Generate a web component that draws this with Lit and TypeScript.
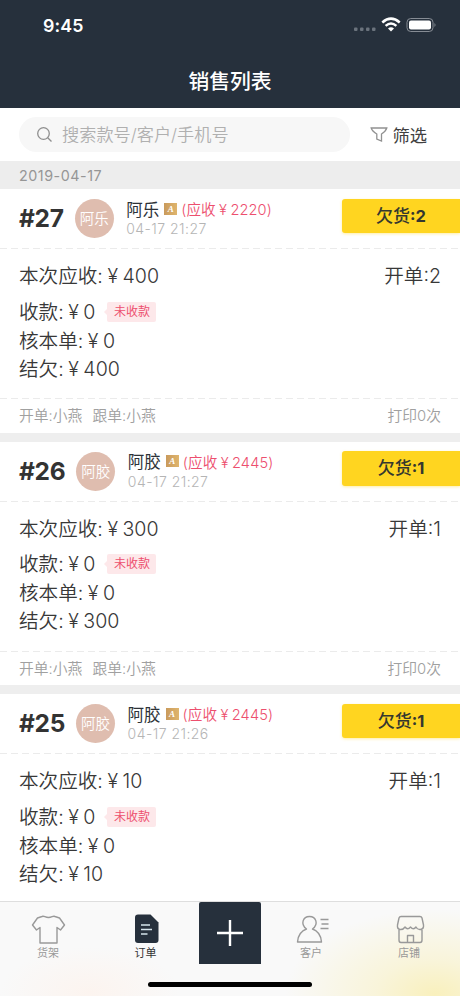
import { LitElement, html, css, svg, nothing } from "lit";
import { customElement, property } from "lit/decorators.js";

interface Order {
  no: number;
  name: string;
  due: number;
  time: string;
  owed: number;
  amount: number;
}

const orders: Order[] = [
  { no: 27, name: "阿乐", due: 2220, time: "04-17 21:27", owed: 2, amount: 400 },
  { no: 26, name: "阿胶", due: 2445, time: "04-17 21:27", owed: 1, amount: 300 },
  { no: 25, name: "阿胶", due: 2445, time: "04-17 21:26", owed: 1, amount: 10 },
];

@customElement("order-card")
export class OrderCard extends LitElement {
  @property({ attribute: false }) order!: Order;
  @property({ type: Boolean }) open = false;

  static styles = css`
    :host { display: block; height: 252.5px; box-sizing: border-box; border-bottom: 9.5px solid #eeeeee; background: #fff; }
    :host([open]) { height: auto; border-bottom: 0; }
    .head { display: flex; height: 59px; box-sizing: border-box; padding-left: 19px; }
    .no { font-weight: 700; font-size: 24.5px; line-height: 30px; color: #333; margin-top: 14px; letter-spacing: -0.3px; }
    .avatar { width: 39px; height: 39px; border-radius: 50%; background: #dfbdaf; color: #fff; font-size: 14.5px; line-height: 39px; text-align: center; margin: 10px 0 0 11px; font-weight: 350; }
    .who { margin: 9px 0 0 12.5px; flex: 1; }
    .line { display: flex; align-items: center; height: 21px; white-space: nowrap; }
    .name { font-size: 16.5px; color: #2d3238; }
    .badge { width: 13px; height: 12px; margin: 0 4px 0 5px; background: linear-gradient(90deg, #c99a5c, #dfb56d); display: flex; align-items: center; justify-content: center; color: #fff; font: italic bold 9px "Liberation Serif", serif; }
    .due { font-size: 14.6px; color: #ed4f6e; font-weight: 350; letter-spacing: 0.1px; }
    .yen { display: inline-block; width: 1em; text-align: center; }
    .time { font-size: 14px; line-height: 18px; margin-top: 1px; color: #b5b5b5; letter-spacing: 0.45px; font-weight: 350; }
    .owed { width: 118px; height: 34.5px; margin-top: 9.5px; box-sizing: border-box; border-radius: 3px 0 0 3px; background: #ffd520; box-shadow: 0 1px 3px #ffd52066; color: #34372f; font-size: 17px; line-height: 35px; text-align: center; font-weight: 500; }
    .owed b { font-weight: 700; font-size: 16.5px; }
    .dash { height: 1px; background: repeating-linear-gradient(90deg, #ebebeb 0 7px, #fff 7px 11px); }
    .body { height: 149px; box-sizing: border-box; padding: 13px 19px 0; font-size: 19.6px; color: #383838; font-weight: 350; }
    .row { display: flex; justify-content: space-between; height: 28px; line-height: 28px; }
    .first { height: 35.5px; }
    .paid { justify-content: flex-start; height: 29px; }
    .tag { display: flex; align-items: center; height: 20px; margin: 4px 0 0 9px; }
    .tag::before { content: ""; border: 3px solid transparent; border-right-color: #fde8ea; border-left: 0; }
    .tag span { background: #fde8ea; border-radius: 2px; height: 20px; line-height: 20px; width: 49px; text-align: center; color: #ed4f6e; font-size: 12px; font-weight: 400; }
    .foot { display: flex; justify-content: space-between; padding: 0 19px; height: 33px; line-height: 34px; font-size: 14.8px; color: #a0a0a0; font-weight: 350; }
    .foot i { font-style: normal; margin-left: 10px; }
  `;

  render() {
    const o = this.order;
    const yen = html`<span class="yen">¥</span>`;
    return html`
      <div class="head">
        <div class="no">#${o.no}</div>
        <div class="avatar">${o.name}</div>
        <div class="who">
          <div class="line"><span class="name">${o.name}</span><span class="badge">A</span><span class="due">(应收${yen}${o.due})</span></div>
          <div class="time">${o.time}</div>
        </div>
        <div class="owed">欠货<b>:${o.owed}</b></div>
      </div>
      <div class="dash"></div>
      <div class="body">
        <div class="row first"><span>本次应收:${yen}${o.amount}</span><span>开单:${o.owed}</span></div>
        <div class="row paid"><span>收款:${yen}0</span><div class="tag"><span>未收款</span></div></div>
        <div class="row"><span>核本单:${yen}0</span></div>
        <div class="row"><span>结欠:${yen}${o.amount}</span></div>
      </div>
      ${this.open ? nothing : html`
        <div class="dash"></div>
        <div class="foot"><span>开单:小燕<i>跟单:小燕</i></span><span>打印0次</span></div>`}
    `;
  }
}

const icons = {
  shelf: svg`<path d="M11 4.500 C13 3.500 14 5.500 17.500 5.500 C21 5.500 22 3.500 24 4.500 L28.500 6 L33.500 13 L29.500 18 L26 15.500 V31 H9 V15.500 L5.500 18 L1.500 13 L6.500 6 Z"/>`,
  order: svg`<path class="solid" d="M9 2.500 H21.500 L29.500 10.500 V28 Q29.500 31 26.500 31 H9 Q6 31 6 28 V5.500 Q6 2.500 9 2.500 Z"/><path class="ink" d="M12 13 H21 M12 17.500 H23 M12 22 H18.500"/>`,
  client: svg`<path d="M10.500 17 C4 12 7 4.500 13.500 4.500 C20 4.500 23 12 16.500 17 C22 19 25 23 25.500 30 H1.500 C2 23 5 19 10.500 17 Z M24.500 7.500 H32.500 M25.500 12 H32.500 M24.500 16.500 H32.500"/>`,
  shop: svg`<path d="M8 4.500 H27 Q28.500 4.500 29 6 L30.500 13 Q31 17 27.500 17.500 Q24.500 18 23 15 Q20.500 18.500 17.500 15 Q14.500 18.500 12 15 Q10 18 7 17.500 Q4 17 4.500 13 L6 6 Q6.500 4.500 8 4.500 Z M6 18 V28 Q6 30.500 8 30.500 H27 Q29 30.500 29 28 V18 M14.500 30 V23.500 H20.500 V30"/>`,
};

@customElement("app-root")
export class AppRoot extends LitElement {
  static styles = css`
    :host { display: flex; flex-direction: column; position: relative; width: 460px; height: 996px; overflow: hidden; background: #fff; font-family: Inter, "Noto Sans CJK SC", sans-serif; color: #333; }
    .top { height: 108px; flex: none; background: #26303c; color: #fff; }
    .status { display: flex; align-items: center; height: 50px; padding: 0 23px 0 43px; box-sizing: border-box; }
    .clock { font-weight: 600; font-size: 17.8px; flex: 1; letter-spacing: 0.1px; }
    .signals { width: 84px; height: 18px; }
    .title { text-align: center; font-size: 20.8px; line-height: 30px; font-weight: 500; margin-top: 17px; }
    .search { flex: none; height: 53px; box-sizing: border-box; display: flex; align-items: center; padding: 0 19px; }
    .field { display: flex; align-items: center; width: 331px; height: 35px; box-sizing: border-box; padding-left: 17px; border-radius: 18px; background: #f7f7f7; color: #b0b0b0; font-size: 17.2px; font-weight: 350; gap: 9px; line-height: 34px; }
    .glass { width: 17px; height: 17px; fill: none; stroke: #8f8f8f; stroke-width: 1.3; }
    .funnel { width: 18px; height: 17px; fill: none; stroke: #919191; stroke-width: 1.3; margin: 0 5px 0 19.5px; }
    .filter { font-size: 17.3px; color: #404040; }
    .date { flex: none; height: 28px; line-height: 29px; padding-left: 19px; background: #ededed; color: #969696; font-size: 14.3px; font-weight: 400; letter-spacing: 0.55px; }
    .list { flex: 1; min-height: 0; overflow: hidden; }
    .tabs { flex: none; height: 95px; box-sizing: border-box; border-top: 1px solid #dedede; display: flex; background: radial-gradient(ellipse 150px 85px at 435px 92px, #f9f0bd 0%, #f9f2cbaa 40%, #f9f9f900 100%), radial-gradient(ellipse 90px 45px at 90px 90px, #fcf4ef 0%, #f9f9f900 100%), #f9f9f9; }
    .tab { display: flex; flex-direction: column; align-items: center; width: 96px; padding-top: 10px; color: #999; font-size: 11px; line-height: 16px; }
    .tab svg { width: 35px; height: 34px; margin-bottom: -1px; fill: none; stroke: #999; stroke-width: 1.4; stroke-linejoin: round; overflow: visible; }
    .tab .solid { fill: #26303c; stroke: none; }
    .tab .ink { stroke: #d5e3ea; stroke-width: 1.5; }
    .tab.on { color: #333; }
    .add { width: 62px; height: 62px; background: #26303c; border-radius: 2px 2px 0 0; }
    .add svg { display: block; width: 62px; height: 62px; stroke: #fff; stroke-width: 2.4; }
    .home { position: absolute; left: 148px; bottom: 9px; width: 164px; height: 5px; border-radius: 3px; background: #000; }
    .t1 { width: 96px; }
    .t2 { width: 103px; box-sizing: border-box; padding-right: 4px; }
    .t2 svg { margin-left: 1px; }
    .t3 { margin-left: 2px; }
    .t3 svg { margin-left: 5px; }
    .t4 { margin-left: 2px; }
    .t4 svg { margin-left: 2px; }
  `;

  private tab(cls: string, icon: unknown, label: string) {
    return html`<div class="tab ${cls}"><svg viewBox="0 0 35 34">${icon}</svg><span>${label}</span></div>`;
  }

  render() {
    return html`
      <div class="top">
        <div class="status">
          <span class="clock">9:45</span>
          <svg class="signals" viewBox="0 0 84 18">
            <g fill="#6b737d"><rect x="1" y="11.500" width="3.500" height="3.500" rx="1"/><rect x="7" y="11.500" width="3.500" height="3.500" rx="1"/><rect x="13" y="11.500" width="3.500" height="3.500" rx="1"/><rect x="19" y="11.500" width="3.500" height="3.500" rx="1"/></g>
            <g fill="none" stroke="#fff" stroke-width="2.500"><path d="M29.300 6.500 Q38 -1.200 46.700 6.500"/><path d="M32.600 9.900 Q38 5.200 43.400 9.900"/></g>
            <path fill="#fff" d="M35 12.500 Q38 10 41 12.500 L38 15.500 Z"/>
            <rect x="54" y="2.500" width="26" height="13" rx="3.800" fill="none" stroke="#868c94"/>
            <rect x="56" y="4.500" width="22" height="9" rx="2" fill="#fff"/>
            <path d="M81.500 7 Q83.500 9 81.500 11 Z" fill="#868c94"/>
          </svg>
        </div>
        <div class="title">销售列表</div>
      </div>
      <div class="search">
        <div class="field">
          <svg class="glass" viewBox="0 0 17 17"><circle cx="7.500" cy="7.500" r="5.800"/><path d="M11.700 11.700 L15.500 15.500"/></svg>
          <span>搜索款号/客户/手机号</span>
        </div>
        <svg class="funnel" viewBox="0 0 18 17"><path d="M1.200 2 H16.800 Q16 5 11.500 8 V15 L6.800 13 V8 Q2 5 1.200 2 Z"/></svg>
        <span class="filter">筛选</span>
      </div>
      <div class="date">2019-04-17</div>
      <div class="list">${orders.map((o, i) => html`<order-card .order=${o} ?open=${i === orders.length - 1}></order-card>`)}</div>
      <div class="tabs">
        ${this.tab("t1", icons.shelf, "货架")}
        ${this.tab("t2 on", icons.order, "订单")}
        <div class="add"><svg viewBox="0 0 62 62"><path d="M18 31 H44 M31 18 V44"/></svg></div>
        ${this.tab("t3", icons.client, "客户")}
        ${this.tab("t4", icons.shop, "店铺")}
      </div>
      <div class="home"></div>
    `;
  }
}
